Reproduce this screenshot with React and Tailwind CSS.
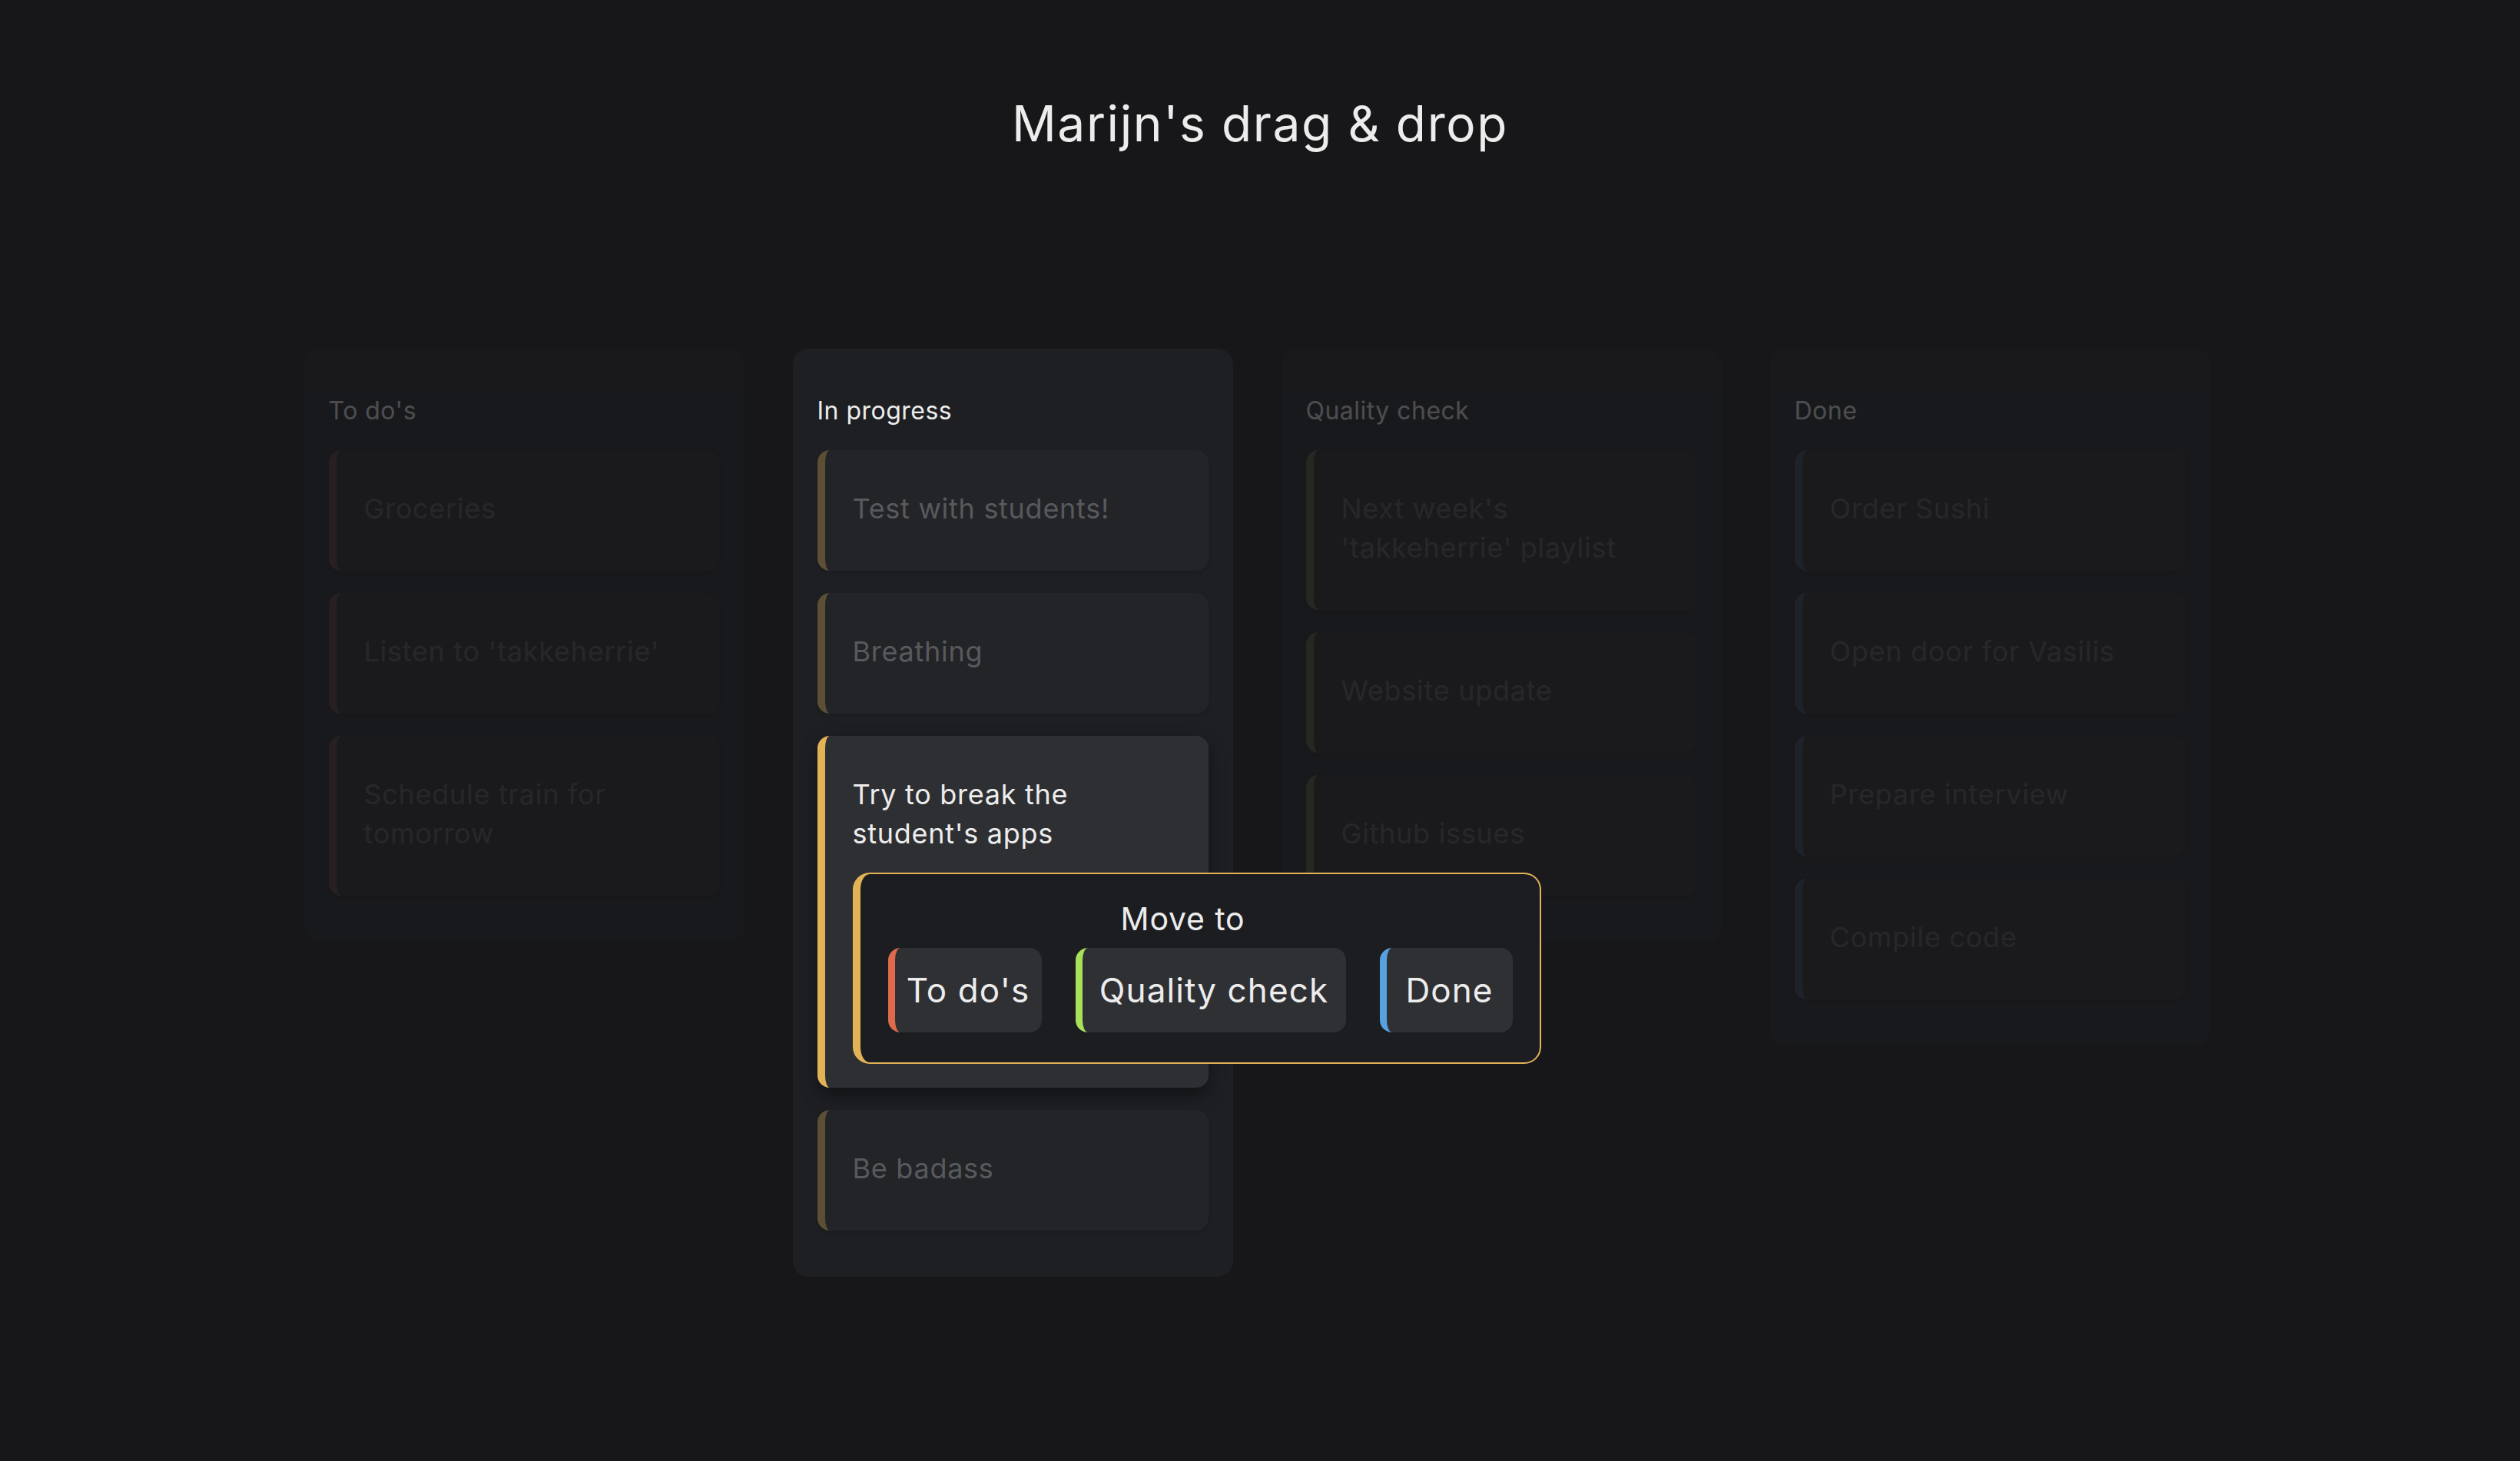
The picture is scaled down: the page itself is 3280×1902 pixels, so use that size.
import React from "react";

const FONT = { fontFamily: "Inter, 'Noto Sans', sans-serif" };

function Card({ text, border, active, children }) {
  if (active) {
    return (
      <div className="rounded-[16px] border-l-[10px] border-[#e2b257] bg-[#2e2f33] pl-[36px] pr-[36px] pt-[51px] pb-[31px] shadow-[0_10px_22px_rgba(0,0,0,0.4)]">
        <div className="text-[36px] leading-[51px] tracking-[0.02em] text-[#ececec]">{text}</div>
        {children}
      </div>
    );
  }
  return (
    <div
      className={`rounded-[16px] border-l-[10px] bg-[#232428] pl-[36px] pr-[36px] pt-[51px] pb-[55px] shadow-[0_2px_4px_rgba(0,0,0,0.15)] ${border}`}
    >
      <div className="text-[36px] leading-[51px] tracking-[0.02em] text-[#58595c]">{text}</div>
    </div>
  );
}

function Column({ title, faded, children, className = "" }) {
  return (
    <div
      className={`w-[573px] shrink-0 rounded-[20px] bg-[#1e1f23] px-[32px] pt-[57px] pb-[60px] ${
        faded ? "opacity-25" : ""
      } ${className}`}
    >
      <div className="mb-[27px] text-[32px] leading-[48px] tracking-[0.015em] text-[#ececec]">{title}</div>
      <div className="flex flex-col gap-[29px]">{children}</div>
    </div>
  );
}

function MoveButton({ label, border, width }) {
  return (
    <div
      className={`flex h-[110px] shrink-0 items-center justify-center rounded-[16px] border-l-[9px] bg-[#2f3034] text-[44px] tracking-[0.025em] text-[#ececec] ${border} ${width}`}
    >
      {label}
    </div>
  );
}

export default function App() {
  return (
    <div className="min-h-[1902px] w-full bg-[#17171a]" style={FONT}>
      <h1 className="pt-[123px] text-center text-[64px] font-normal leading-[76px] tracking-[0.025em] text-[#ececec]">
        Marijn's drag &amp; drop
      </h1>
      <div className="mt-[255px] flex items-start justify-center gap-[63px] pr-[8px]">
        <Column title="To do's" faded>
          <Card text="Groceries" border="border-[#5b3a32]" />
          <Card text="Listen to 'takkeherrie'" border="border-[#5b3a32]" />
          <Card text="Schedule train for tomorrow" border="border-[#5b3a32]" />
        </Column>
        <Column title="In progress" className="relative z-10">
          <Card text="Test with students!" border="border-[#5c4f33]" />
          <Card text="Breathing" border="border-[#5c4f33]" />
          <Card text="Try to break the student's apps" active>
            <div className="mt-[25px] w-[896px] rounded-[22px] border-2 border-l-[10px] border-[#e2b257] bg-[#1c1d21] pt-[34px] pb-[39px]">
              <div className="pr-[44px] text-center text-[41px] leading-[48px] tracking-[0.02em] text-[#ececec]">Move to</div>
              <div className="mt-[14px] flex gap-[44px] pl-[36px]">
                <MoveButton label="To do's" border="border-[#dd6a4a]" width="w-[200px]" />
                <MoveButton label="Quality check" border="border-[#a8e05a]" width="w-[352px]" />
                <MoveButton label="Done" border="border-[#58a0e0]" width="w-[173px]" />
              </div>
            </div>
          </Card>
          <Card text="Be badass" border="border-[#5c4f33]" />
        </Column>
        <Column title="Quality check" faded>
          <Card text="Next week's 'takkeherrie' playlist" border="border-[#4b5c37]" />
          <Card text="Website update" border="border-[#4b5c37]" />
          <Card text="Github issues" border="border-[#4b5c37]" />
        </Column>
        <Column title="Done" faded>
          <Card text="Order Sushi" border="border-[#33495f]" />
          <Card text="Open door for Vasilis" border="border-[#33495f]" />
          <Card text="Prepare interview" border="border-[#33495f]" />
          <Card text="Compile code" border="border-[#33495f]" />
        </Column>
      </div>
    </div>
  );
}
